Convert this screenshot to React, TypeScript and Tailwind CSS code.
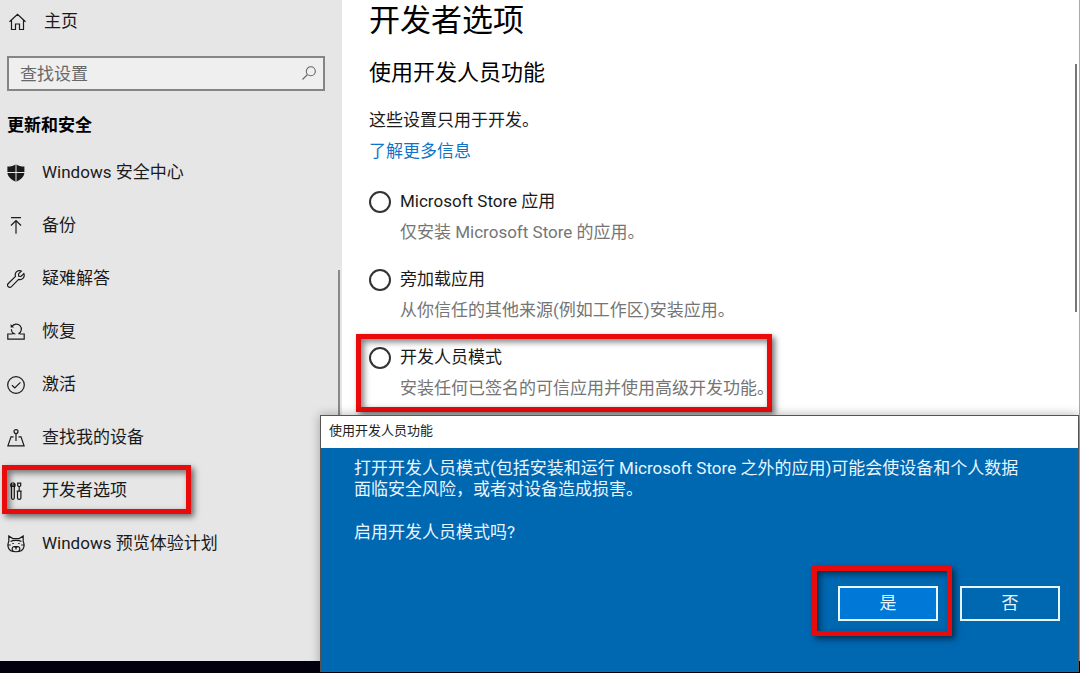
import React, { JSX, useState } from "react";

interface NavEntry {
  label: string;
  icon: JSX.Element;
  highlighted?: boolean;
}

interface ModeOption {
  id: string;
  title: string;
  description: string;
  highlighted?: boolean;
}

function Icon({ children }: { children: React.ReactNode }): JSX.Element {
  return (
    <svg
      viewBox="0 0 18 18"
      className="w-[18px] h-[18px] shrink-0"
      fill="none"
      stroke="currentColor"
      strokeWidth="1.2"
      aria-hidden="true"
    >
      {children}
    </svg>
  );
}

const navEntries: NavEntry[] = [
  {
    label: "Windows 安全中心",
    icon: (
      <Icon>
        <path
          d="M9 .2C6.800 1.900 4 2.600.4 2.600V8c0 4.600 3.600 7.600 8.600 9.800 5-2.200 8.400-5.200 8.400-9.800V2.600C14 2.600 11.200 1.900 9 .2Z"
          fill="currentColor"
          stroke="none"
        />
        <path d="M9 0v18M0 8.500h18" stroke="#e6e6e6" strokeWidth="1" />
      </Icon>
    ),
  },
  {
    label: "备份",
    icon: (
      <Icon>
        <path d="M4 .6h10M9 16.800V3.500M4 8.500l5-5 5 5" />
      </Icon>
    ),
  },
  {
    label: "疑难解答",
    icon: (
      <Icon>
        <path d="M16.800 3.600 14 6.400l-2.300-.2-.2-2.300L14.300 1.100C12.500.3 10.500.7 9.400 1.900 8.200 3.200 8 4.900 8.500 6.400L1.300 13.500c-1 1-1 2.300-.1 3.200s2.300.9 3.300-.1l7.100-7.200c1.500.5 3.200.2 4.400-1 1.200-1.200 1.500-3.100.8-4.800Z" />
      </Icon>
    ),
  },
  {
    label: "恢复",
    icon: (
      <Icon>
        <path d="M5 11H.8v5.200h16.400V11H13" />
        <path d="M5 3.600A5 5 0 1 1 11.500 10.600H13M4.300 6.200c0 2 1 3.500 2.600 4.400H5" />
        <path d="M3.600 1v3.400H7Z" fill="currentColor" stroke="none" />
      </Icon>
    ),
  },
  {
    label: "激活",
    icon: (
      <Icon>
        <circle cx="9" cy="9" r="8.300" />
        <path d="m5 9.200 2.800 2.700 5.600-5.600" />
      </Icon>
    ),
  },
  {
    label: "查找我的设备",
    icon: (
      <Icon>
        <circle cx="9" cy="2.600" r="2" />
        <path d="M9 4.600V12M6.500 7.800H4L.9 16.900h16.200L14 7.800h-2.500" />
      </Icon>
    ),
  },
  {
    label: "开发者选项",
    highlighted: true,
    icon: (
      <Icon>
        <path d="M4.900 1v3.300h2V1c1.500.7 1.700 2.900.4 4.500v10.300c0 2-2.800 2-2.800 0V5.500C3.200 3.900 3.400 1.700 4.900 1ZM10.500 9.200h3.400v6.800c0 1.800-3.400 1.800-3.400 0V9.200ZM9.700 9.200h5M12.200 9.200V5M10.700 1.200h3v2.500L12.200 5l-1.500-1.300V1.200Z" />
      </Icon>
    ),
  },
  {
    label: "Windows 预览体验计划",
    icon: (
      <Icon>
        <path d="M1.800 6.500V1l4 2.600h6.400l4-2.600v5.500c.9 1.800 1.200 4 .4 6.200-1.300 5.400-13.900 5.400-15.200 0-.8-2.200-.5-4.400.4-6.200Z" />
        <path d="M3.500 6.500C6 5 12 5 14.500 6.500M.8 10h3M17.200 10h-3M5.300 8.500h1.500M11.200 8.500h1.500M6 16c-1.500-2-.8-4 1-4.500h4c1.800.5 2.500 2.500 1 4.500M7.500 11.500 9 13l1.500-1.500M9 13v1.500" />
      </Icon>
    ),
  },
];

const modeOptions: ModeOption[] = [
  { id: "store", title: "Microsoft Store 应用", description: "仅安装 Microsoft Store 的应用。" },
  { id: "sideload", title: "旁加载应用", description: "从你信任的其他来源(例如工作区)安装应用。" },
  {
    id: "developer",
    title: "开发人员模式",
    description: "安装任何已签名的可信应用并使用高级开发功能。",
    highlighted: true,
  },
];

// Red frame drawn around whatever the user should click
function Highlight({ className }: { className: string }): JSX.Element {
  return (
    <span
      className={`absolute pointer-events-none border-[5px] border-[#e90b0b] shadow-[3px_3px_6px_rgba(0,0,0,0.55),inset_3px_3px_6px_rgba(0,0,0,0.5)] ${className}`}
    />
  );
}

function Sidebar(): JSX.Element {
  return (
    <aside className="relative w-[342px] shrink-0 bg-[#e6e6e6]">
      <a href="#home" className="flex items-center h-[42px] pt-0.5 pl-2 gap-[18px]">
        <Icon>
          <path d="M1.500 8.800 9.500 1.300l8 7.500M3.500 7.200v9.300h4v-5.500h4v5.500h4V7.200" />
        </Icon>
        主页
      </a>

      <div className="relative mt-[14px] ml-[7px] mr-[17px]">
        <input
          type="text"
          aria-label="查找设置"
          placeholder="查找设置"
          className="block w-full h-[35px] pl-[11px] pr-8 bg-[#efefef] border-2 border-[#858585] placeholder:text-[#686868] outline-none"
        />
        <svg
          viewBox="0 0 14 14"
          className="absolute right-[9px] top-[10px] w-[14px] h-[14px] text-[#666]"
          fill="none"
          stroke="currentColor"
          strokeWidth="1.1"
          aria-hidden="true"
        >
          <circle cx="8.800" cy="5.200" r="4.500" />
          <path d="M5.500 8.500.5 13.500" />
        </svg>
      </div>

      <h2 className="mt-[23px] ml-[7px] leading-[22px] font-bold text-black">更新和安全</h2>

      <nav className="mt-[9px]">
        <ul>
          {navEntries.map((entry) => (
            <li key={entry.label} className="relative">
              <a href="#settings" className="flex items-center h-[53px] pt-0.5 pl-[7px] gap-[17px]">
                {entry.icon}
                {entry.label}
              </a>
              {entry.highlighted && <Highlight className="left-[2px] w-[189px] inset-y-[2px]" />}
            </li>
          ))}
        </ul>
      </nav>

      {/* Scrollbar */}
      <span className="absolute right-[2px] top-[270px] bottom-24 w-[2px] bg-[#888]" />
    </aside>
  );
}

function DeveloperSettings(): JSX.Element {
  const [mode, setMode] = useState("");

  return (
    <main className="relative flex-1 pl-[27px] bg-white border-r border-[#aaa]">
      <h1 className="text-[31px] leading-[42px] text-black">开发者选项</h1>
      <h2 className="mt-[15px] text-[22px] leading-[32px] text-black">使用开发人员功能</h2>
      <p className="mt-4 leading-[31px]">这些设置只用于开发。</p>
      <a href="#more" className="block w-fit leading-[31px] text-[#0f74c8]">
        了解更多信息
      </a>

      <div className="mt-[19px] flex flex-col gap-4">
        {modeOptions.map((option) => (
          <div key={option.id} className="relative w-fit">
            <label className="flex items-center gap-[9px] leading-[31px]">
              <input
                type="radio"
                name="mode"
                value={option.id}
                checked={mode === option.id}
                onChange={() => setMode(option.id)}
                aria-describedby={`${option.id}-description`}
                className="appearance-none w-[22px] h-[22px] rounded-full border-2 border-[#333] checked:bg-[#333]"
              />
              {option.title}
            </label>
            <p id={`${option.id}-description`} className="pl-[31px] leading-[31px] text-[#757575]">
              {option.description}
            </p>
            {option.highlighted && <Highlight className="-left-[13px] right-0.5 -top-2 -bottom-2" />}
          </div>
        ))}
      </div>

      {/* Scrollbar */}
      <span className="absolute right-[2px] top-16 w-[2px] h-[248px] bg-[#777]" />
    </main>
  );
}

function ConfirmDialog(): JSX.Element {
  return (
    <section
      role="dialog"
      aria-labelledby="dialog-title"
      className="absolute left-[320px] right-px top-[415px] bottom-px flex flex-col border border-[#555] bg-[#0067b1] text-[#e8f6ff] shadow-[0_0_10px_rgba(0,0,0,0.3)]"
    >
      <h2 id="dialog-title" className="h-8 pl-2 bg-white text-[13px] leading-[30px] text-[#222]">
        使用开发人员功能
      </h2>
      <div className="flex flex-col flex-1 pt-[10px] pl-[33px] pr-[18px] pb-[50px]">
        <p className="max-w-[672px] leading-[21px]">
          打开开发人员模式(包括安装和运行 Microsoft Store 之外的应用)可能会使设备和个人数据面临安全风险，或者对设备造成损害。
        </p>
        <p className="mt-[22px] leading-[21px]">启用开发人员模式吗?</p>
        <div className="flex justify-end gap-[22px] mt-auto">
          <div className="relative">
            <button className="block w-[100px] h-[35px] border-2 border-[#e8f6ff] bg-[#0078d7]">是</button>
            <Highlight className="-left-[26px] -right-[14px] -top-5 -bottom-[15px]" />
          </div>
          <button className="block w-[100px] h-[35px] border-2 border-[#e8f6ff]">否</button>
        </div>
      </div>
    </section>
  );
}

export default function App(): JSX.Element {
  return (
    <div className="relative flex flex-col min-h-screen overflow-hidden bg-[#02000f] pb-3 font-['Roboto','Noto_Sans_CJK_SC',sans-serif] text-[17px] text-[#1a1a1a]">
      <div className="flex flex-1">
        <Sidebar />
        <DeveloperSettings />
      </div>
      <ConfirmDialog />
    </div>
  );
}
